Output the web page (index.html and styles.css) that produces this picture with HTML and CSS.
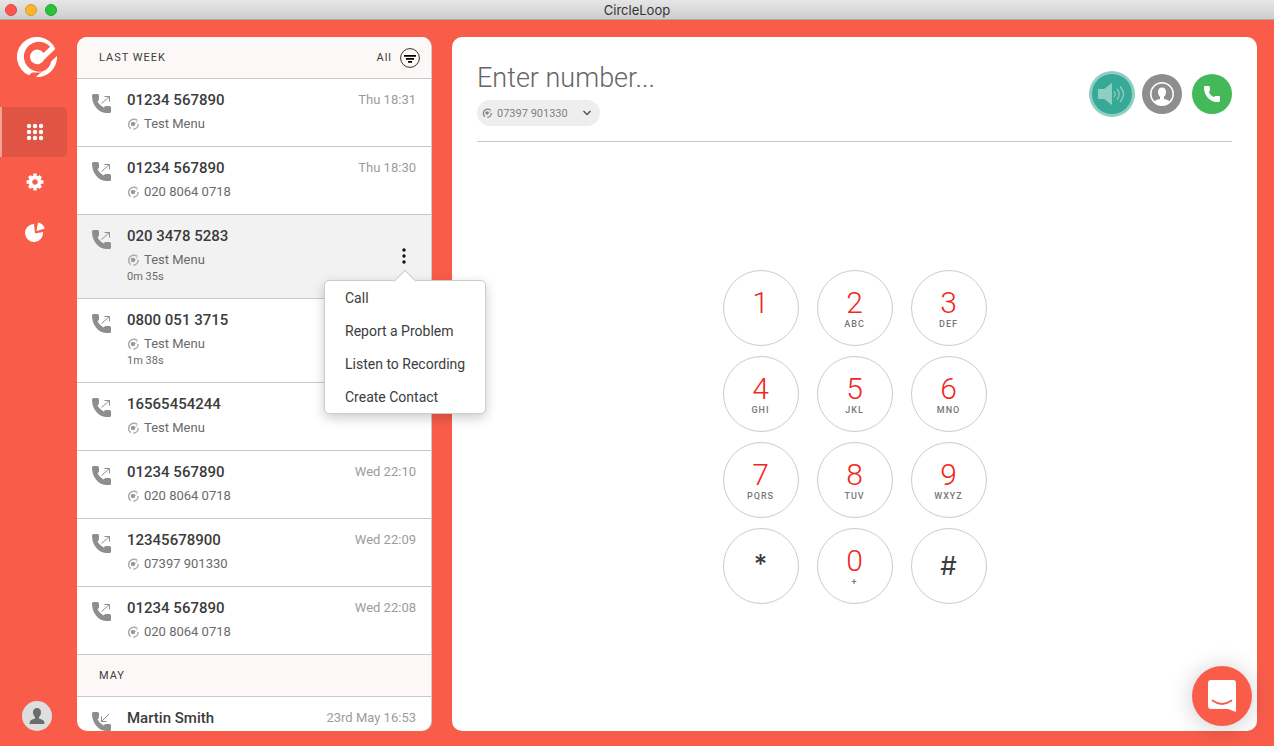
FILE: index.html
```html
<!DOCTYPE html>
<html lang="en">
<head>
  <meta charset="utf-8">
  <title>CircleLoop</title>
  <link rel="stylesheet" href="styles.css">
</head>
<body>

  <!-- shared icons -->
  <svg class="sprite" aria-hidden="true">
    <symbol id="logo" viewBox="0 0 40 40">
      <path d="M38.3 12A20 20 0 1 0 12 38.3L15 35.5L23 35.5L24 34.5A15 15 0 1 1 33.2 9.8L26.5 16A7.3 7.3 0 1 0 27 22.8Z"/>
      <path d="M40 19A20 20 0 0 1 19 40L25 34.6Q32 33 34.5 24Z"/>
    </symbol>
    <symbol id="logo-small" viewBox="0 0 12 12">
      <path d="M10.2 2.4A5.200 5.200 0 1 0 3.600 10.600M11.200 6A5.200 5.200 0 0 1 6.300 11.200" fill="none" stroke="currentColor" stroke-width="1.500"/>
      <path d="M8 6L11 2.800" stroke="currentColor" opacity="0.6"/>
      <circle cx="6" cy="6" r="2.200"/>
    </symbol>
    <symbol id="handset" viewBox="0 0 19 19">
      <path d="M1.5 0H5.5Q7 0 7 1.5V5.2Q7 6.2 5.6 7.2Q7 10.8 11.7 13.4Q12.8 12 13.8 12H17.5Q19 12 19 13.5V17.5Q19 19 17.5 19H14Q8 18.5 4 13.5Q0 8.5 0 1.5Q0 0 1.5 0Z"/>
    </symbol>
    <symbol id="call-out" viewBox="0 0 20 20">
      <use href="#handset" width="19" height="19"/>
      <path d="M9.5 9.5L17.5 2.5M12.5 2.5H17.5V7.5" fill="none" stroke="currentColor"/>
    </symbol>
    <symbol id="call-in" viewBox="0 0 20 20">
      <use href="#handset" width="19" height="19"/>
      <path d="M17 2L9.5 9.5M9.5 4.5V9.5H14.5" fill="none" stroke="currentColor"/>
    </symbol>
  </svg>

  <header class="titlebar">
    <div class="lights">
      <span class="light red"></span>
      <span class="light yellow"></span>
      <span class="light green"></span>
    </div>
    <span class="app-name">CircleLoop</span>
  </header>

  <div class="app">

    <aside class="sidebar">
      <svg class="brand" aria-hidden="true"><use href="#logo"/></svg>
      <nav>
        <a href="#keypad" class="nav-item active" aria-label="Keypad">
          <svg width="18" height="18" viewBox="0 0 18 18">
            <circle cx="3" cy="3" r="2.2"/><circle cx="9" cy="3" r="2.2"/><circle cx="15" cy="3" r="2.2"/>
            <circle cx="3" cy="9" r="2.2"/><circle cx="9" cy="9" r="2.2"/><circle cx="15" cy="9" r="2.2"/>
            <circle cx="3" cy="15" r="2.2"/><circle cx="9" cy="15" r="2.2"/><circle cx="15" cy="15" r="2.2"/>
          </svg>
        </a>
        <a href="#settings" class="nav-item" aria-label="Settings">
          <svg width="18" height="18" viewBox="-9 -9 18 18" fill="none" stroke="#fff">
            <circle r="4.6" stroke-width="3.6"/>
            <path stroke-width="3.4" d="M0-5V-8.4M0 5V8.4M-5 0H-8.4M5 0H8.4M3.7 3.7L5.8 5.8M-3.7 3.7L-5.8 5.8M3.7-3.7L5.8-5.8M-3.7-3.7L-5.8-5.8"/>
          </svg>
        </a>
        <a href="#reports" class="nav-item" aria-label="Reports">
          <svg width="20" height="20" viewBox="0 0 20 20">
            <path d="M9 2A9 9 0 1 0 18 10L10 11.5Z"/>
            <path d="M11.5 9L13 0.5Q18 1.5 19.8 6.5Z"/>
          </svg>
        </a>
      </nav>
      <button class="avatar" aria-label="Account">
        <svg width="16" height="16" viewBox="0 0 16 16">
          <path d="M8 0Q12 0 12 4.5Q12 7.5 10 9V10.5L14 12Q15.5 12.8 15.5 16H.5Q.5 12.8 2 12L6 10.5V9Q4 7.5 4 4.5Q4 0 8 0Z"/>
        </svg>
      </button>
    </aside>

    <section class="history">
      <div class="history-list">
        <div class="group-header">
          <h2>LAST WEEK</h2>
          <button class="filter">All
            <svg width="20" height="20" viewBox="0 0 20 20">
              <circle cx="10" cy="10" r="9.4" fill="none" stroke="#333"/>
              <path d="M4 7h12v1.7H4zM6 10h8v1.7H6zM8 13h4v1.7H8z"/>
            </svg>
          </button>
        </div>
        <ul>
          <li class="call">
            <svg class="direction"><use href="#call-out"/></svg>
            <div class="details">
              <h3>01234 567890</h3>
              <p class="via"><svg><use href="#logo-small"/></svg>Test Menu</p>
            </div>
            <time>Thu 18:31</time>
          </li>
          <li class="call">
            <svg class="direction"><use href="#call-out"/></svg>
            <div class="details">
              <h3>01234 567890</h3>
              <p class="via"><svg><use href="#logo-small"/></svg>020 8064 0718</p>
            </div>
            <time>Thu 18:30</time>
          </li>
          <li class="call selected">
            <svg class="direction"><use href="#call-out"/></svg>
            <div class="details">
              <h3>020 3478 5283</h3>
              <p class="via"><svg><use href="#logo-small"/></svg>Test Menu</p>
              <p class="duration">0m 35s</p>
            </div>
            <button class="more" aria-label="More options">
              <svg width="4" height="16" viewBox="0 0 4 16"><circle cx="2" cy="2" r="1.7"/><circle cx="2" cy="8" r="1.7"/><circle cx="2" cy="14" r="1.7"/></svg>
            </button>
          </li>
          <li class="call">
            <svg class="direction"><use href="#call-out"/></svg>
            <div class="details">
              <h3>0800 051 3715</h3>
              <p class="via"><svg><use href="#logo-small"/></svg>Test Menu</p>
              <p class="duration">1m 38s</p>
            </div>
          </li>
          <li class="call">
            <svg class="direction"><use href="#call-out"/></svg>
            <div class="details">
              <h3>16565454244</h3>
              <p class="via"><svg><use href="#logo-small"/></svg>Test Menu</p>
            </div>
          </li>
          <li class="call">
            <svg class="direction"><use href="#call-out"/></svg>
            <div class="details">
              <h3>01234 567890</h3>
              <p class="via"><svg><use href="#logo-small"/></svg>020 8064 0718</p>
            </div>
            <time>Wed 22:10</time>
          </li>
          <li class="call">
            <svg class="direction"><use href="#call-out"/></svg>
            <div class="details">
              <h3>12345678900</h3>
              <p class="via"><svg><use href="#logo-small"/></svg>07397 901330</p>
            </div>
            <time>Wed 22:09</time>
          </li>
          <li class="call">
            <svg class="direction"><use href="#call-out"/></svg>
            <div class="details">
              <h3>01234 567890</h3>
              <p class="via"><svg><use href="#logo-small"/></svg>020 8064 0718</p>
            </div>
            <time>Wed 22:08</time>
          </li>
        </ul>
        <div class="group-header">
          <h2>MAY</h2>
        </div>
        <ul>
          <li class="call">
            <svg class="direction"><use href="#call-in"/></svg>
            <div class="details">
              <h3>Martin Smith</h3>
            </div>
            <time>23rd May 16:53</time>
          </li>
        </ul>
      </div>

      <div class="menu">
        <button>Call</button>
        <button>Report a Problem</button>
        <button>Listen to Recording</button>
        <button>Create Contact</button>
      </div>
    </section>

    <main class="dialer">
      <div class="dial-bar">
        <div class="entry">
          <input type="text" class="number" placeholder="Enter number..." aria-label="Enter number">
          <button class="caller-id">
            <svg class="mini-logo"><use href="#logo-small"/></svg>
            07397 901330
            <svg class="chevron" viewBox="0 0 10 6"><path d="M1.5 1L5 4.5L8.5 1" fill="none" stroke="#555" stroke-width="1.5"/></svg>
          </button>
        </div>
        <div class="actions">
          <button class="round speaker" aria-label="Speaker">
            <svg width="28" height="24" viewBox="0 0 28 24">
              <path d="M0 7H6L14 1V23L6 17H0Z"/>
              <path d="M16 9.5Q18.5 12 16 15M19 7Q23.5 12 19 17.5M22 4.5Q29 12 22 20" fill="none" stroke="#8fcfc2" stroke-width="1.3"/>
            </svg>
          </button>
          <button class="round contact" aria-label="Contacts">
            <svg width="24" height="24" viewBox="0 0 24 24">
              <circle cx="12" cy="12" r="11.2" fill="none" stroke="#fff" stroke-width="1.5"/>
              <path d="M12 5.5Q16 5.5 16 10Q16 13 14 15V17Q19 18 20 20Q16 23.5 12 23.5Q8 23.5 4 20Q5 18 10 17V15Q8 13 8 10Q8 5.5 12 5.5Z"/>
            </svg>
          </button>
          <button class="round call-button" aria-label="Call">
            <svg width="16" height="16"><use href="#handset"/></svg>
          </button>
        </div>
      </div>

      <div class="keypad" id="keypad">
        <button class="key">1</button>
        <button class="key">2<small>ABC</small></button>
        <button class="key">3<small>DEF</small></button>
        <button class="key">4<small>GHI</small></button>
        <button class="key">5<small>JKL</small></button>
        <button class="key">6<small>MNO</small></button>
        <button class="key">7<small>PQRS</small></button>
        <button class="key">8<small>TUV</small></button>
        <button class="key">9<small>WXYZ</small></button>
        <button class="key symbol star">*</button>
        <button class="key">0<small>+</small></button>
        <button class="key symbol">#</button>
      </div>
    </main>
  </div>

  <button class="chat" aria-label="Open chat">
    <svg width="28" height="32" viewBox="0 0 28 32">
      <path d="M3 0H25Q28 0 28 3V32L20 29H3Q0 29 0 26V3Q0 0 3 0Z" fill="#fff"/>
      <path d="M4.5 20.5Q14 27.5 23.5 20.5" fill="none" stroke="#f95d4a" stroke-width="1.8" stroke-linecap="round"/>
    </svg>
  </button>

</body>
</html>
```
FILE: styles.css
```css
* {
  box-sizing: border-box;
}

body {
  margin: 0;
  height: 100vh;
  display: flex;
  flex-direction: column;
  overflow: hidden;
  background-color: #f95d4a;
  color: #3c3c3c;
  font-family: Roboto, "Liberation Sans", sans-serif;
  font-size: 14px;
}

h2, h3, p, ul {
  margin: 0;
  padding: 0;
}

ul {
  list-style: none;
}

button {
  border: none;
  padding: 0;
  background: none;
  color: inherit;
  font-family: inherit;
  font-size: 14px;
  cursor: pointer;
}

svg {
  flex: none;
}

.sprite {
  position: absolute;
  width: 0;
  height: 0;
}

/* window title bar */
.titlebar {
  flex: none;
  height: 20px;
  display: grid;
  grid-template-columns: 1fr auto 1fr;
  align-items: center;
  padding: 0 5px;
  background: linear-gradient(#e6e6e6, #cecece);
  border-bottom: 1px solid #b0a8a8;
}

.lights {
  display: flex;
  gap: 8px;
}

.light {
  width: 12px;
  height: 12px;
  border-radius: 50%;
}

.red {
  background-color: #fc5650;
  border: 1px solid #dc4540;
}

.yellow {
  background-color: #fdb52c;
  border: 1px solid #d99a2c;
}

.green {
  background-color: #28c33b;
  border: 1px solid #1fa32e;
}

.app-name {
  font-family: Inter, sans-serif;
  font-size: 13px;
  line-height: 18px;
  color: #333;
}

.app {
  flex: 1;
  min-height: 0;
  display: flex;
  padding: 17px 17px 15px 0;
}

/* sidebar */
.sidebar {
  flex: none;
  width: 77px;
  display: flex;
  flex-direction: column;
}

.brand {
  width: 40px;
  height: 40px;
  margin: 0 0 30px 17px;
  fill: #fff;
}

.nav-item {
  display: flex;
  align-items: center;
  justify-content: center;
  width: 67px;
  height: 50px;
  border-left: 2px solid transparent;
  border-radius: 0 5px 5px 0;
  fill: #fff;
}

.nav-item.active {
  background-color: #df5443;
  border-left-color: #f5a196;
}

.avatar {
  display: flex;
  align-items: center;
  justify-content: center;
  width: 30px;
  height: 30px;
  margin: auto 0 0 22px;
  border-radius: 50%;
  background-color: #dedede;
  fill: #6c6c6c;
}

/* call history */
.history {
  position: relative;
  flex: none;
  width: 355px;
  margin-right: 20px;
}

.history-list {
  height: 100%;
  overflow: hidden;
  background-color: #fff;
  border-right: 1px solid #ccc;
  border-radius: 10px;
}

.group-header {
  display: flex;
  align-items: center;
  justify-content: space-between;
  height: 42px;
  padding: 0 11px 0 22px;
  background-color: #fcf8f7;
  border-bottom: 1px solid #c8c8c8;
}

.group-header h2 {
  font-size: 11px;
  font-weight: 400;
  letter-spacing: 1px;
}

.filter {
  display: flex;
  align-items: center;
  gap: 8px;
  font-size: 11px;
  letter-spacing: 1px;
}

.call {
  display: flex;
  padding: 12px 15px 13px;
  border-bottom: 1px solid #c8c8c8;
}

.call.selected {
  background-color: #f2f2f2;
}

.direction {
  width: 20px;
  height: 20px;
  margin: 3px 15px 0 0;
  fill: #8e8e8e;
  color: #8e8e8e;
}

.details {
  flex: 1;
}

.details h3 {
  font-size: 15px;
  font-weight: 500;
  line-height: 18px;
}

.via {
  display: flex;
  align-items: center;
  gap: 5px;
  margin-top: 6px;
  font-size: 13px;
  line-height: 18px;
  color: #6a6a6a;
}

.via svg {
  width: 12px;
  height: 12px;
  fill: #999;
  color: #aaa;
}

.duration {
  font-size: 11px;
  line-height: 16px;
  color: #6a6a6a;
}

time {
  font-size: 13px;
  line-height: 18px;
  color: #9c9c9c;
}

.more {
  align-self: center;
  display: flex;
  justify-content: center;
  width: 24px;
  fill: #111;
}

/* row menu */
.menu {
  position: absolute;
  top: 243px;
  right: -54px;
  z-index: 1;
  width: 162px;
  background-color: #fff;
  border: 1px solid #ccc;
  border-radius: 5px;
  box-shadow: 0 4px 12px rgba(0, 0, 0, 0.2);
}

.menu::before {
  content: "";
  position: absolute;
  top: -8px;
  left: 72px;
  width: 15px;
  height: 15px;
  background-color: #fff;
  border: 1px solid #ccc;
  border-width: 1px 0 0 1px;
  transform: rotate(45deg);
}

.menu button {
  position: relative;
  display: block;
  width: 100%;
  height: 33px;
  padding-left: 20px;
  text-align: left;
}

/* dialer */
.dialer {
  flex: 1;
  display: flex;
  flex-direction: column;
  padding: 0 25px;
  background-color: #fff;
  border-radius: 10px;
}

.dial-bar {
  display: flex;
  justify-content: space-between;
  align-items: center;
  padding: 24px 0 15px;
  border-bottom: 1px solid #c8c8c8;
}

.entry {
  flex: 1;
}

.number {
  display: block;
  width: 100%;
  height: 34px;
  margin-bottom: 5px;
  padding: 0;
  border: none;
  outline: none;
  color: #3c3c3c;
  font-family: inherit;
  font-size: 27px;
  font-weight: 300;
}

.number::placeholder {
  color: #666;
}

.caller-id {
  display: flex;
  align-items: center;
  gap: 5px;
  height: 26px;
  padding: 0 8px 0 5px;
  border-radius: 13px;
  background-color: #eee;
  color: #808080;
  font-size: 11px;
}

.mini-logo {
  width: 10px;
  height: 10px;
  fill: #888;
}

.chevron {
  width: 10px;
  height: 6px;
  margin-left: 9px;
}

.actions {
  display: flex;
  gap: 10px;
}

.round {
  display: flex;
  align-items: center;
  justify-content: center;
  width: 40px;
  height: 40px;
  border-radius: 50%;
  fill: #fff;
}

.speaker {
  background-color: #36aa96;
  box-shadow: 0 0 0 3px #8fcfc2;
  fill: #8fcfc2;
}

.contact {
  background-color: #8e8e8e;
}

.call-button {
  background-color: #43b95a;
}

.keypad {
  margin: auto;
  display: grid;
  grid-template-columns: repeat(3, 76px);
  gap: 10px 18px;
}

.key {
  display: flex;
  flex-direction: column;
  align-items: center;
  height: 76px;
  padding-top: 15px;
  border: 1px solid #ccc;
  border-radius: 50%;
  color: #f0281e;
  font-size: 30px;
  font-weight: 300;
  line-height: 34px;
}

.key small {
  color: #777;
  font-size: 9px;
  font-weight: 500;
  line-height: 9px;
  letter-spacing: 1px;
}

.key.symbol {
  justify-content: center;
  padding: 0;
  color: #3c3c3c;
  font-family: Inter, sans-serif;
  font-size: 26px;
  font-weight: 400;
}

.key.star {
  padding-bottom: 4px;
  font-weight: 500;
}

/* support chat launcher */
.chat {
  position: fixed;
  right: 22px;
  bottom: 20px;
  display: flex;
  align-items: center;
  justify-content: center;
  width: 60px;
  height: 60px;
  border-radius: 50%;
  background-color: #f95d4a;
  box-shadow: 0 2px 24px rgba(0, 0, 0, 0.2);
}
```
